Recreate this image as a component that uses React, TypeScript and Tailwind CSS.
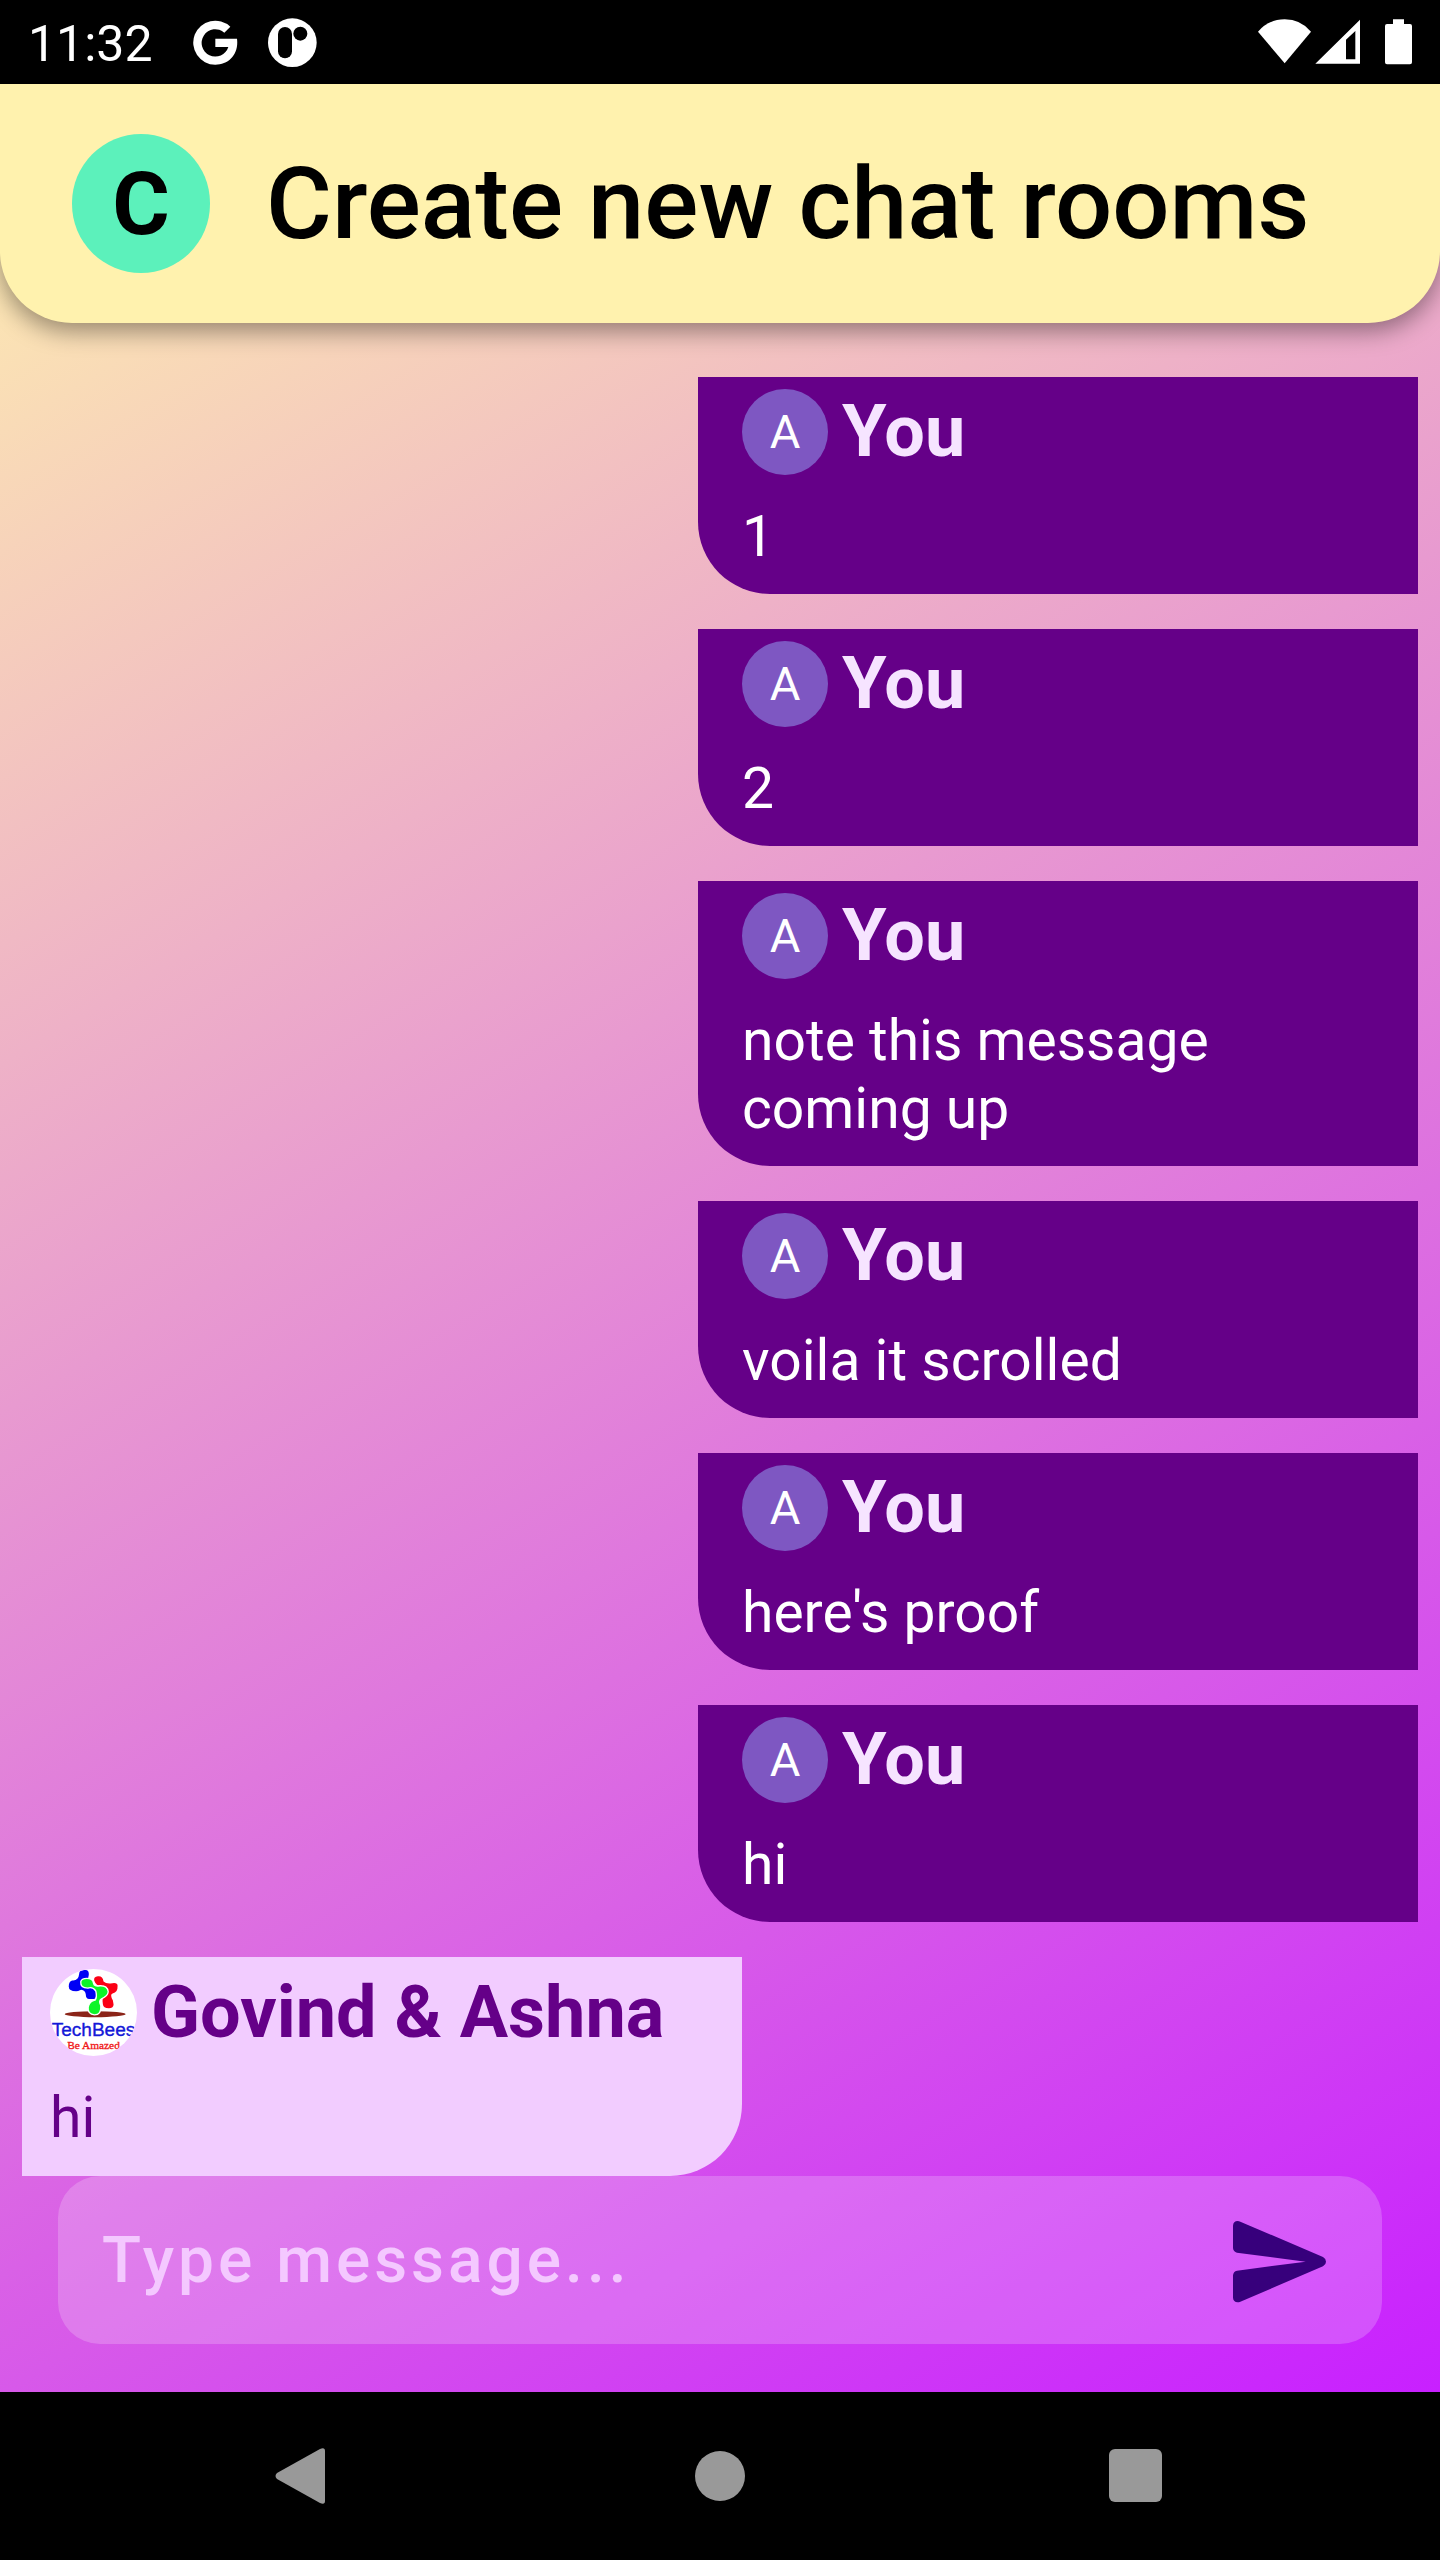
import React from "react";

type Message = { id: number; text: string };

const ownMessages: Message[] = [
  { id: 1, text: "1" },
  { id: 2, text: "2" },
  { id: 3, text: "note this message coming up" },
  { id: 4, text: "voila it scrolled" },
  { id: 5, text: "here's proof" },
  { id: 6, text: "hi" },
];

function StatusBar() {
  return (
    <div className="flex h-[84px] shrink-0 items-center justify-between bg-black px-7 text-white">
      <div className="flex items-center">
        <span className="pt-[3px] text-[50px] leading-[60px]">11:32</span>
        <svg className="ml-[40px] h-[45px] w-[45px]" viewBox="0 0 135 135" aria-label="Google" role="img">
          <path
            fill="#fff"
            d="M112 20 94 38A41 41 0 1 0 106 81H67V56H132C138 102 108 134 67 134A66 66 0 1 1 112 20Z"
          />
        </svg>
        <svg className="ml-[30px] h-[49px] w-[49px]" viewBox="0 0 147 147" aria-label="App notification" role="img">
          <circle cx="73" cy="74" r="73" fill="#fff" />
          <rect x="30" y="27" width="42" height="94" rx="21" fill="#000" />
          <circle cx="97" cy="47" r="21" fill="#000" />
        </svg>
      </div>
      <svg className="h-[46px] w-[154px]" viewBox="0 0 462 138" aria-label="Wi-Fi, signal and battery" role="img">
        <g fill="#fff">
          <path d="M0 38Q32 1 80 1T159 38L80 133Z" />
          <path fillRule="evenodd" d="M172 134 306 2V134ZM264 62V121H292V36Z" />
          <path d="M405 1H438V15H456Q462 15 462 21V130Q462 136 456 136H387Q381 136 381 130V21Q381 15 387 15H405Z" />
        </g>
      </svg>
    </div>
  );
}

function TechBeesLogo() {
  return (
    <svg className="h-[87px] w-[87px] shrink-0" viewBox="0 0 260 260" aria-label="TechBees" role="img">
      <defs>
        <clipPath id="avatar-clip">
          <circle cx="130" cy="130" r="130" />
        </clipPath>
      </defs>
      <g clipPath="url(#avatar-clip)">
        <rect width="260" height="260" fill="#fff" />
        <ellipse cx="135" cy="135" rx="91" ry="9" fill="#8b2418" />
        <path
          fill="#0000f5"
          d="M87 16Q87 3 100 3L108 3Q117 5 116 17Q116 28 108 35Q128 42 129 53Q138 60 138 76Q138 90 128 90H117Q107 89 107 76Q106 64 93 62L84 66Q56 68 56 52Q56 37 66 34Q85 36 87 16Z"
        />
        <path
          fill="#fb0015"
          d="M132 34Q130 24 143 22Q157 20 160 37Q167 44 181 43Q202 38 202 50Q203 70 187 73Q178 76 188 94L190 106Q190 117 176 117Q159 117 158 105Q156 98 158 83L171 76Q178 54 161 50Q139 54 132 34Z"
        />
        <path
          fill="#0df528"
          stroke="#fff"
          strokeWidth="4"
          d="M92 38Q94 28 110 28Q128 28 130 42Q132 54 149 50Q172 49 174 68Q173 81 154 89Q144 94 152 110Q154 137 133 137Q112 135 114 115Q118 95 135 93Q141 85 137 66Q128 52 113 57Q90 57 92 38Z"
        />
        <text x="130" y="200" textAnchor="middle" fontSize="57" fill="#1418d8" stroke="#1418d8" fontFamily="Liberation Sans, sans-serif">
          TechBees
        </text>
        <text x="130" y="238" textAnchor="middle" fontSize="34" fill="#f01818" stroke="#f01818" fontFamily="Liberation Serif, serif">
          Be Amazed
        </text>
      </g>
    </svg>
  );
}

function OwnMessage({ text }: { text: string }) {
  return (
    <li className="mr-[22px] w-1/2 self-end rounded-bl-[72px] bg-[#650088] px-11 pt-3 pb-[23px]">
      <div className="flex items-center gap-[14px]">
        <span className="flex h-[86px] w-[86px] shrink-0 items-center justify-center rounded-full bg-[#7e57c2] text-[47px] leading-[56px] text-white">
          A
        </span>
        <span className="text-[72px] leading-[86px] font-bold text-[#f6e4ff]">You</span>
      </div>
      <p className="mt-7 text-[57px] leading-[68px] text-white">{text}</p>
    </li>
  );
}

export default function App() {
  return (
    <div className="flex min-h-screen flex-col bg-black font-[Roboto,sans-serif]">
      <StatusBar />
      <main className="flex grow flex-col bg-[linear-gradient(149deg,#fff2ae,#c820ff)]">
        <header className="flex items-center gap-[56px] rounded-b-[72px] bg-[#fff2ae] px-[72px] py-[50px] shadow-[0_8px_24px_rgba(0,0,0,0.4)]">
          <span className="flex h-[139px] w-[138px] shrink-0 items-center justify-center rounded-full bg-[#5cf1bb] text-[88px] leading-[100px] font-bold text-black">
            C
          </span>
          <h1 className="text-[101px] leading-[120px] font-medium text-black">Create new chat rooms</h1>
        </header>

        <ul className="mt-[54px] flex flex-col gap-[35px]">
          {ownMessages.map((message) => (
            <OwnMessage key={message.id} text={message.text} />
          ))}
          <li className="ml-[22px] w-1/2 self-start rounded-br-[72px] bg-[#f2ccff] px-7 pt-3 pb-6 text-[#650088]">
            <div className="flex items-center gap-[14px]">
              <TechBeesLogo />
              <span className="text-[72px] leading-[86px] font-bold whitespace-nowrap">Govind &amp; Ashna</span>
            </div>
            <p className="mt-7 text-[57px] leading-[68px]">hi</p>
          </li>
        </ul>

        <form
          className="mx-[58px] mt-auto mb-12 flex h-[168px] items-center rounded-[42px] bg-white/20 pr-[55px] pl-11"
          onSubmit={(event) => event.preventDefault()}
        >
          <input
            type="text"
            aria-label="Message"
            placeholder="Type message..."
            className="h-[100px] min-w-0 grow bg-transparent text-[64px] font-medium tracking-[4px] text-[#37007c] outline-none placeholder:text-[#f4c8ff]"
          />
          <button type="submit" aria-label="Send" className="shrink-0 pt-1">
            <svg className="h-[82px] w-[94px]" viewBox="0 0 282 246">
              <path
                fill="#37007c"
                d="M0 14Q1 0 14 0Q18 0 22 2L270 108Q279 113 279 122Q279 131 270 136L22 242Q18 244 14 244Q1 243 0 230V163Q1 151 12 149L218 122L12 95Q1 92 0 81Z"
              />
            </svg>
          </button>
        </form>
      </main>

      <nav className="flex h-[168px] shrink-0 items-center justify-between bg-black pr-[274px] pl-[268px]" aria-label="System navigation">
        <button type="button" aria-label="Back">
          <svg className="h-[60px] w-[60px]" viewBox="0 0 60 60">
            <path fill="#999" d="M9 27 52 3Q57 1 57 5V55Q57 59 52 57L9 33Q6 30 9 27Z" />
          </svg>
        </button>
        <button type="button" aria-label="Home">
          <svg className="h-[60px] w-[60px]" viewBox="0 0 60 60">
            <circle cx="33" cy="30" r="25" fill="#999" />
          </svg>
        </button>
        <button type="button" aria-label="Recent apps">
          <svg className="h-[60px] w-[60px]" viewBox="0 0 60 60">
            <rect x="3" y="3" width="53" height="53" rx="6" fill="#999" />
          </svg>
        </button>
      </nav>
    </div>
  );
}
